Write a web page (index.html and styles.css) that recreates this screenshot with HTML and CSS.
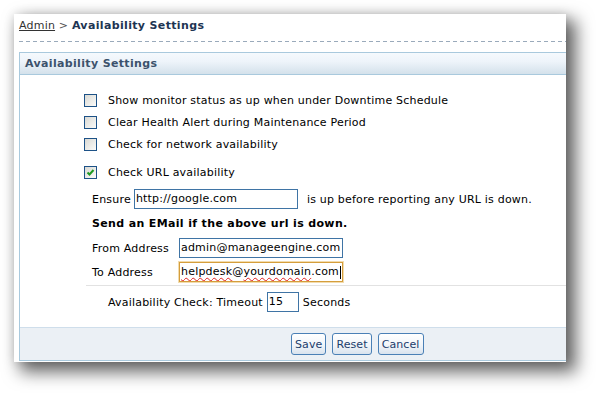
FILE: index.html
```html
<!DOCTYPE html>
<html lang="en">
<head>
    <meta charset="UTF-8">
    <title>Availability Settings</title>
    <link rel="stylesheet" href="styles.css">
</head>
<body>
    <div class="card">
        <div class="crumb">
            <a href="#">Admin</a> <span class="sep">&gt;</span> <b>Availability Settings</b>
        </div>
        <div class="dashes"></div>

        <div class="panel">
            <div class="panel-head">Availability Settings</div>
            <div class="panel-body">
                <div class="checks">
                    <label class="check"><span class="cb"></span>Show monitor status as up when under Downtime Schedule</label>
                    <label class="check"><span class="cb"></span>Clear Health Alert during Maintenance Period</label>
                    <label class="check"><span class="cb"></span>Check for network availability</label>
                    <label class="check url"><span class="cb"><svg width="11" height="11" viewBox="0 0 11 11"><path d="M2.5 5.5 L4.5 7.5 L8.5 3" fill="none" stroke="#1e9a22" stroke-width="2"/></svg></span>Check URL availability</label>
                </div>

                <div class="url-opts">
                    <div class="ensure">
                        Ensure <span class="field wide">http://google.com</span> <span class="after">is up before reporting any URL is down.</span>
                    </div>
                    <div class="send">Send an EMail if the above url is down.</div>
                    <div class="addr">
                        <span class="lbl">From Address</span>
                        <span class="field wide">admin@manageengine.com</span>
                    </div>
                    <div class="addr">
                        <span class="lbl">To Address</span>
                        <span class="field wide focus"><span class="typo">helpdesk</span>@<span class="typo">yourdomain</span>.com<span class="caret"></span></span>
                    </div>
                </div>

                <div class="rule"></div>

                <div class="timeout">
                    Availability Check: Timeout <span class="field small">15</span> Seconds
                </div>

                <div class="actions">
                    <button type="button">Save</button>
                    <button type="button">Reset</button>
                    <button type="button">Cancel</button>
                </div>
            </div>
        </div>
    </div>
</body>
</html>
```

FILE: styles.css
```css
html, body {
    height: 100%;
}
body {
    margin: 0;
    background-color: #fff;
    font-family: "DejaVu Sans", Verdana, sans-serif;
    font-size: 11px;
    letter-spacing: 0.2px;
    color: #000;
}
b, .send, .panel-head {
    letter-spacing: 0.35px;
}
.card {
    width: 552px;
    margin: 14px 0 0 14px;
    padding: 5px 0 1px 5px;
    box-sizing: border-box;
    background-color: #fff;
    overflow: hidden;
    box-shadow: 8px 8px 16px 2px rgba(0, 0, 0, 0.6), 0 0 10px rgba(0, 0, 0, 0.12);
}
.crumb {
    height: 14px;
    line-height: 14px;
    color: #1d3452;
}
.crumb a {
    color: #333;
}
.crumb .sep {
    color: #555;
}
.dashes {
    height: 1px;
    margin-top: 8px;
    background: repeating-linear-gradient(90deg, #9aaabb 0 4px, transparent 4px 7px);
}
.panel {
    margin-top: 10px;
    border: 1px solid #a9c9dd;
    border-right: none;
}
.panel-head {
    height: 21px;
    line-height: 21px;
    padding-left: 5px;
    font-weight: bold;
    color: #3c526c;
    background: linear-gradient(#f5f9fd 0%, #eef4fa 40%, #d4e1eb 100%);
    border-bottom: 1px solid #a9c9dd;
}
.panel-body {
    padding-top: 14px;
}
.checks {
    padding-left: 64px;
}
.check {
    display: flex;
    align-items: center;
    gap: 11px;
    height: 22px;
}
.check.url {
    margin-top: 6px;
}
.cb {
    width: 13px;
    height: 13px;
    box-sizing: border-box;
    border: 1px solid #1d5287;
    background: linear-gradient(135deg, #d9d9d4, #fbfbf9);
    display: flex;
    align-items: center;
    justify-content: center;
}
.url-opts {
    padding-left: 72px;
    margin-top: 6px;
}
.ensure, .addr {
    display: flex;
    align-items: center;
    height: 20px;
}
.ensure .field {
    margin-left: 3px;
}
.ensure .after {
    margin-left: 9px;
}
.send {
    font-weight: bold;
    height: 20px;
    line-height: 20px;
    margin-top: 5px;
}
.addr {
    margin-top: 4px;
}
.lbl {
    width: 87px;
}
.field {
    height: 20px;
    line-height: 18px;
    box-sizing: border-box;
    border: 1px solid #3f74a5;
    padding: 0 1px;
    background-color: #fff;
    white-space: nowrap;
    overflow: hidden;
    letter-spacing: 0.2px;
}
.field.wide {
    width: 164px;
}
.field.small {
    width: 32px;
    margin: 0 4px;
}
.field.focus {
    border-color: #d59e3c;
    box-shadow: 0 0 0 1px #f2dcae;
    display: flex;
    align-items: center;
}
.typo {
    text-decoration: underline wavy #e02020;
    text-decoration-thickness: 1px;
    text-underline-offset: 2px;
}
.caret {
    width: 1px;
    height: 13px;
    margin-left: 1px;
    background-color: #000;
}
.rule {
    height: 1px;
    margin: 3px 0 0 66px;
    background-color: #e2e2e2;
}
.timeout {
    display: flex;
    align-items: center;
    height: 20px;
    margin-top: 6px;
    padding-left: 88px;
}
.actions {
    margin-top: 15px;
    height: 33px;
    padding: 5px 0 0 271px;
    box-sizing: border-box;
    display: flex;
    gap: 6px;
    background-color: #ebf0f5;
    border-top: 1px solid #cfdeeb;
}
.actions button {
    height: 22px;
    padding: 0 3px;
    font-family: "DejaVu Sans", Verdana, sans-serif;
    font-size: 11px;
    letter-spacing: 0.1px;
    color: #1b3d6c;
    border: 1px solid #4a80b6;
    border-radius: 3px;
    background: linear-gradient(#ffffff, #f1f5f9 55%, #d9e3ee);
    cursor: pointer;
}
```
